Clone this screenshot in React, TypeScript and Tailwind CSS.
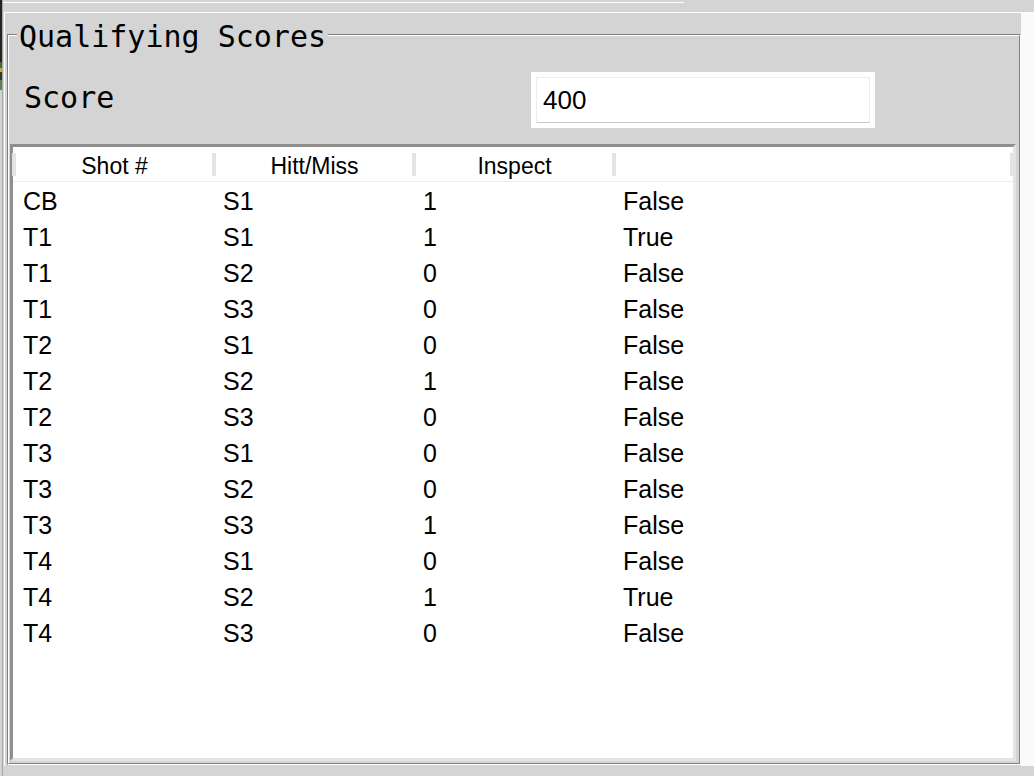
const rows: [string, string, string, string][] = [
  ["CB", "S1", "1", "False"],
  ["T1", "S1", "1", "True"],
  ["T1", "S2", "0", "False"],
  ["T1", "S3", "0", "False"],
  ["T2", "S1", "0", "False"],
  ["T2", "S2", "1", "False"],
  ["T2", "S3", "0", "False"],
  ["T3", "S1", "0", "False"],
  ["T3", "S2", "0", "False"],
  ["T3", "S3", "1", "False"],
  ["T4", "S1", "0", "False"],
  ["T4", "S2", "1", "True"],
  ["T4", "S3", "0", "False"],
];

const headers = [
  { label: "Shot #", w: "w-[200px]" },
  { label: "Hitt/Miss", w: "w-[200px]" },
  { label: "Inspect", w: "w-[200px]" },
  { label: "", w: "w-[400px]" },
];

function HeaderCell({ label, w, last }: { label: string; w: string; last?: boolean }) {
  return (
    <div className={`${w} h-full flex items-center`}>
      <div className="w-[4px] h-[23px] bg-[#e3e3e3] -ml-[1px]" />
      <div className="flex-1 text-center pt-[4px] text-[23px]">{label}</div>
      {last && <div className="w-[4px] h-[23px] bg-[#e3e3e3] -mr-[1px]" />}
    </div>
  );
}

export default function App() {
  return (
    <div className="w-[1034px] h-[776px] bg-[#d4d4d4] flex overflow-hidden text-black">
      {/* edge of the window behind */}
      <div className="w-[3px] flex flex-col border-r border-[#a9a9a9]">
        <div className="h-[62px] bg-[#24251a]" />
        <div className="h-[6px] bg-[#3d6b3a]" />
        <div className="h-[4px] bg-[#c8a93a]" />
        <div className="h-[8px] bg-[#2d3a28]" />
        <div className="h-[10px] bg-[#5b7f52]" />
        <div className="flex-1" />
      </div>

      <div className="flex-1 flex flex-col">
        {/* strip above the frame */}
        <div className="h-[12px] pt-[2px]">
          <div className="h-px w-[681px] bg-white" />
        </div>

        {/* frame */}
        <div className="ml-[1px] h-[754px] bg-[#fafafa] border-t border-l border-white flex">
          <div className="w-[1016px] h-full bg-[#d4d4d4] pt-[21px] pl-[2px]">
            {/* group box (etched) */}
            <div className="relative w-[1014px] h-[731px] border-t border-l border-[#7f7f7f] border-b border-r border-b-white border-r-white">
              <span className="absolute left-[9px] -top-[13px] px-[2px] bg-[#d4d4d4] font-['DejaVu_Sans_Mono',monospace] text-[30px] leading-[30px]">
                Qualifying Scores
              </span>
              <div className="w-full h-full border-t border-l border-white border-b border-r border-b-[#7f7f7f] border-r-[#7f7f7f] flex flex-col pl-[1px]">
                {/* score row */}
                <div className="h-[108px] flex items-start">
                  <div className="w-[521px] pl-[14px] mt-[47px] font-['DejaVu_Sans_Mono',monospace] text-[30px] leading-[30px]">
                    Score
                  </div>
                  <div className="mt-[36px] w-[344px] h-[56px] bg-white p-[5px]">
                    <div className="w-full h-full border border-[#ececec] border-b-[#c9c9c9] flex items-center pl-[6px] font-['Liberation_Sans',Arial,sans-serif] text-[26px]">
                      400
                    </div>
                  </div>
                </div>

                {/* table */}
                <div className="w-[1006px] h-[617px] bg-white border-t-[3px] border-l-[3px] border-[#8f8f8f] border-b-[3px] border-r-[3px] border-b-[#e3e3e3] border-r-[#e3e3e3] font-['Liberation_Sans',Arial,sans-serif] flex flex-col">
                  <div className="h-[35px] flex border-b border-[#ececec]">
                    {headers.map((h, i) => (
                      <HeaderCell key={i} label={h.label} w={h.w} last={i === headers.length - 1} />
                    ))}
                  </div>
                  {rows.map((r, i) => (
                    <div key={i} className="h-[36px] pt-[4px] flex items-center text-[25px]">
                      <div className="w-[200px] pl-[10px]">{r[0]}</div>
                      <div className="w-[200px] pl-[10px]">{r[1]}</div>
                      <div className="w-[200px] pl-[10px]">{r[2]}</div>
                      <div className="w-[400px] pl-[10px]">{r[3]}</div>
                    </div>
                  ))}
                </div>
              </div>
            </div>
          </div>
          <div className="flex-1" />
        </div>
      </div>
    </div>
  );
}
